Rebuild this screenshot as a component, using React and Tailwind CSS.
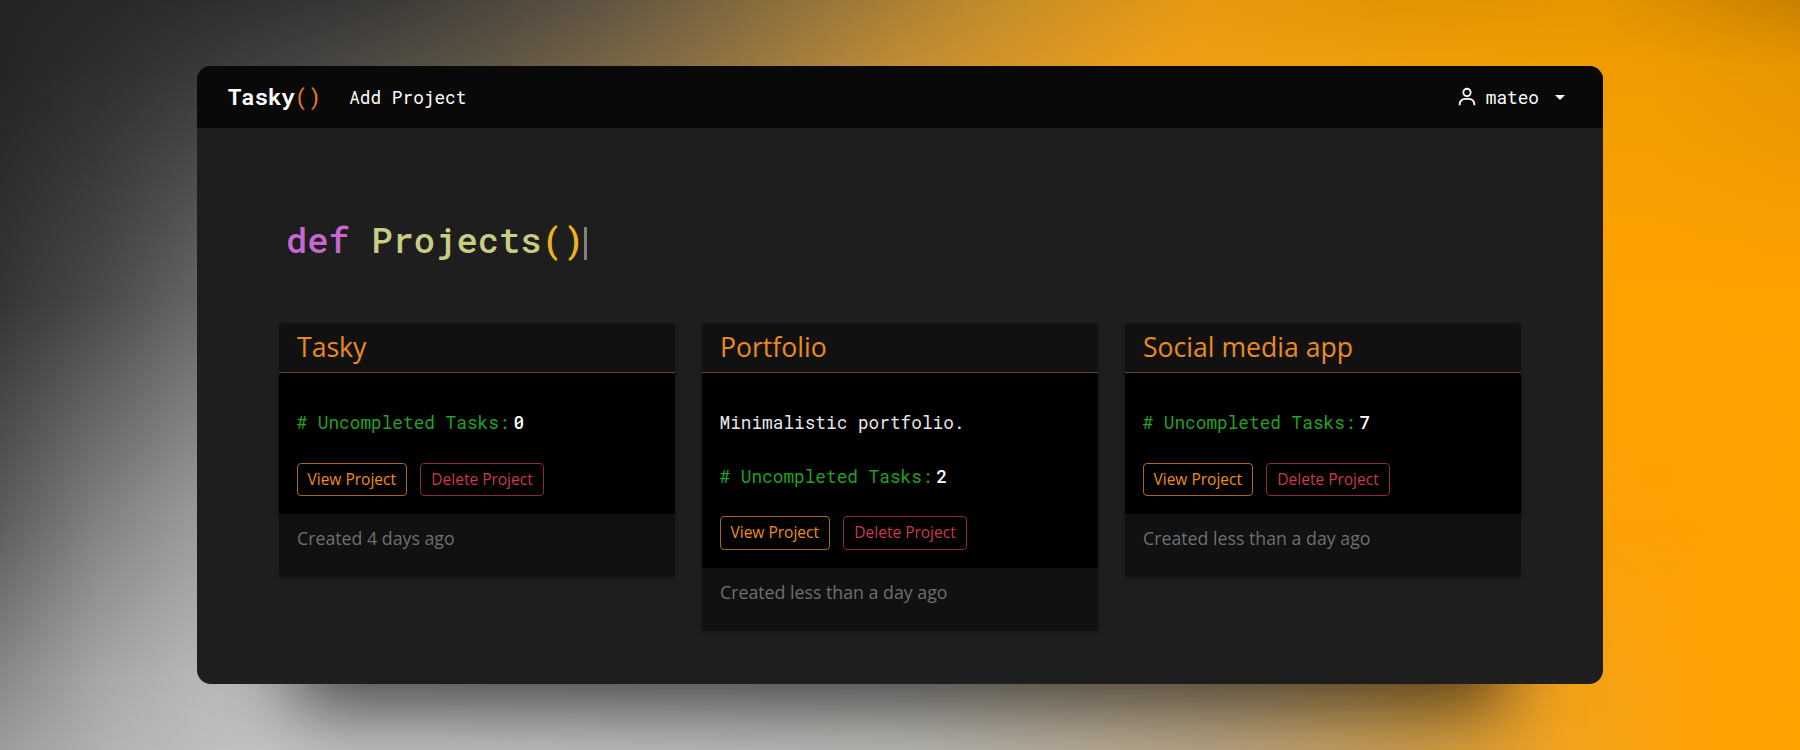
import { LuUser } from "react-icons/lu";
import { BiUser } from "react-icons/bi";

const rows = [
  { mask: "", bg: "bg-[linear-gradient(90deg,#242424_0,#2b2b2b_150px,#3b3937_380px,#5f5443_600px,#92733c_800px,#c48d29_1000px,#e79a12_1200px,#e39402_1400px,#e79600_1600px,#c88100_1800px)]" },
  { mask: "[mask-image:linear-gradient(180deg,transparent_0,#000_66px)]", bg: "bg-[linear-gradient(90deg,#252525_0,#303030_120px,#444342_300px,#5f5645_500px,#8a7045_700px,#c08c35_900px,#ec9e18_1150px,#f09d04_1500px,#f09c00_1650px,#e89500_1800px)]" },
  { mask: "[mask-image:linear-gradient(180deg,transparent_66px,#000_300px)]", bg: "bg-[linear-gradient(90deg,#353535_0,#4a4a4a_100px,#666_200px,#888_600px,#ffa200_1500px,#ffa200_1800px)]" },
  { mask: "[mask-image:linear-gradient(180deg,transparent_300px,#000_520px)]", bg: "bg-[linear-gradient(90deg,#5c5c5c_0,#828282_100px,#9c9c9c_200px,#a4a4a4_600px,#fba008_1500px,#ffa200_1800px)]" },
  { mask: "[mask-image:linear-gradient(180deg,transparent_520px,#000_683px)]", bg: "bg-[linear-gradient(90deg,#8a8a8a_0,#a8a8a8_100px,#b8b8b8_200px,#c0c0bf_400px,#b8b6b2_900px,#c0a67a_1250px,#dba03c_1450px,#f3a31c_1560px,#ffa205_1700px,#ffa200_1800px)]" },
  { mask: "[mask-image:linear-gradient(180deg,transparent_683px,#000_750px)]", bg: "bg-[linear-gradient(90deg,#9c9c9c_0,#b4b4b4_120px,#c3c3c3_260px,#c3c2c1_500px,#bcbbb8_900px,#bba98a_1200px,#cfa052_1400px,#f1a31f_1560px,#ffa205_1700px,#ffa200_1800px)]" },
];

const projects = [
  { name: "Tasky", tasks: 0, created: "Created 4 days ago" },
  { name: "Portfolio", description: "Minimalistic portfolio.", tasks: 2, created: "Created less than a day ago" },
  { name: "Social media app", tasks: 7, created: "Created less than a day ago" },
];

const mono = "font-['Roboto_Mono','Liberation_Mono',monospace]";

function ProjectCard({ project }) {
  return (
    <article className="rounded-[4px] bg-[#111] shadow-[0_2px_5px_rgba(0,0,0,0.25)]">
      <h2 className="h-[50px] border-b border-[#6e4226] px-[18px] text-[26.6px] leading-[49px] text-[#ec8b1e]">
        {project.name}
      </h2>
      <div className="bg-black px-[17.5px] pt-[36px] pb-[18px]">
        {project.description && (
          <p className={`${mono} mb-[27px] text-[17.75px] leading-[26.6px] text-[#e6e6e6]`}>{project.description}</p>
        )}
        <p className={`${mono} text-[17.75px] leading-[26.6px] text-[#22a122]`}>
          # Uncompleted Tasks:
          <span className="ml-1 font-medium text-white">{project.tasks}</span>
        </p>
        <div className="mt-[27px] flex gap-[13px]">
          <button className="h-[33.5px] w-[110.5px] rounded-[4px] border border-[#a8691c] text-[15.5px] text-[#f08c1c]">View Project</button>
          <button className="h-[33.5px] w-[124px] rounded-[4px] border border-[#8a2c3a] text-[15.5px] text-[#c93a4c]">Delete Project</button>
        </div>
      </div>
      <p className="h-[63px] px-[18px] pt-[11px] text-[17.75px] leading-[26.6px] text-[#6b7072]">{project.created}</p>
    </article>
  );
}

export default function App() {
  return (
    <div className="grid h-[750px] w-[1800px] overflow-hidden font-['Open_Sans','Noto_Sans',sans-serif]">
      {rows.map((row, i) => (
        <div key={i} className={`col-start-1 row-start-1 ${row.bg} ${row.mask}`} />
      ))}
      <main className="z-10 col-start-1 row-start-1 mt-[66px] ml-[197px] h-[618px] w-[1406px] overflow-visible rounded-[14px] bg-[#1e1e1e] shadow-[0_120px_70px_-98px_rgba(0,0,0,0.65)]">
        <nav className={`${mono} flex h-[62px] items-center rounded-t-[14px] bg-[#0a090a] pr-[38px] pl-[31px] text-white`}>
          <span className="text-[22.2px] font-bold">
            Tasky<span className="font-normal text-[#ec7f1c]">()</span>
          </span>
          <span className="ml-[28px] text-[17.75px]">Add Project</span>
          <span className="ml-auto flex items-center text-[17.75px]">
            <BiUser className="mr-[8px] size-[22px]" />
            mateo
            <span className="ml-[16px] size-0 border-x-[5px] border-t-[5px] border-x-transparent border-t-white" />
          </span>
        </nav>
        <h1 className={`${mono} mt-[85px] ml-[89px] text-[35.5px] leading-[54px] font-medium text-[#c9cd83] whitespace-pre`}>
          <span className="text-[#c867d2]">def</span> Projects<span className="text-[#f0b414]">()</span>
          <span className="inline-block h-[33px] w-[3px] translate-y-[7px] bg-[#808080]" />
        </h1>
        <div className="mt-[56px] ml-[82px] grid w-[1242px] grid-cols-3 items-start gap-[27px]">
          {projects.map((p) => (
            <ProjectCard key={p.name} project={p} />
          ))}
        </div>
      </main>
    </div>
  );
}
